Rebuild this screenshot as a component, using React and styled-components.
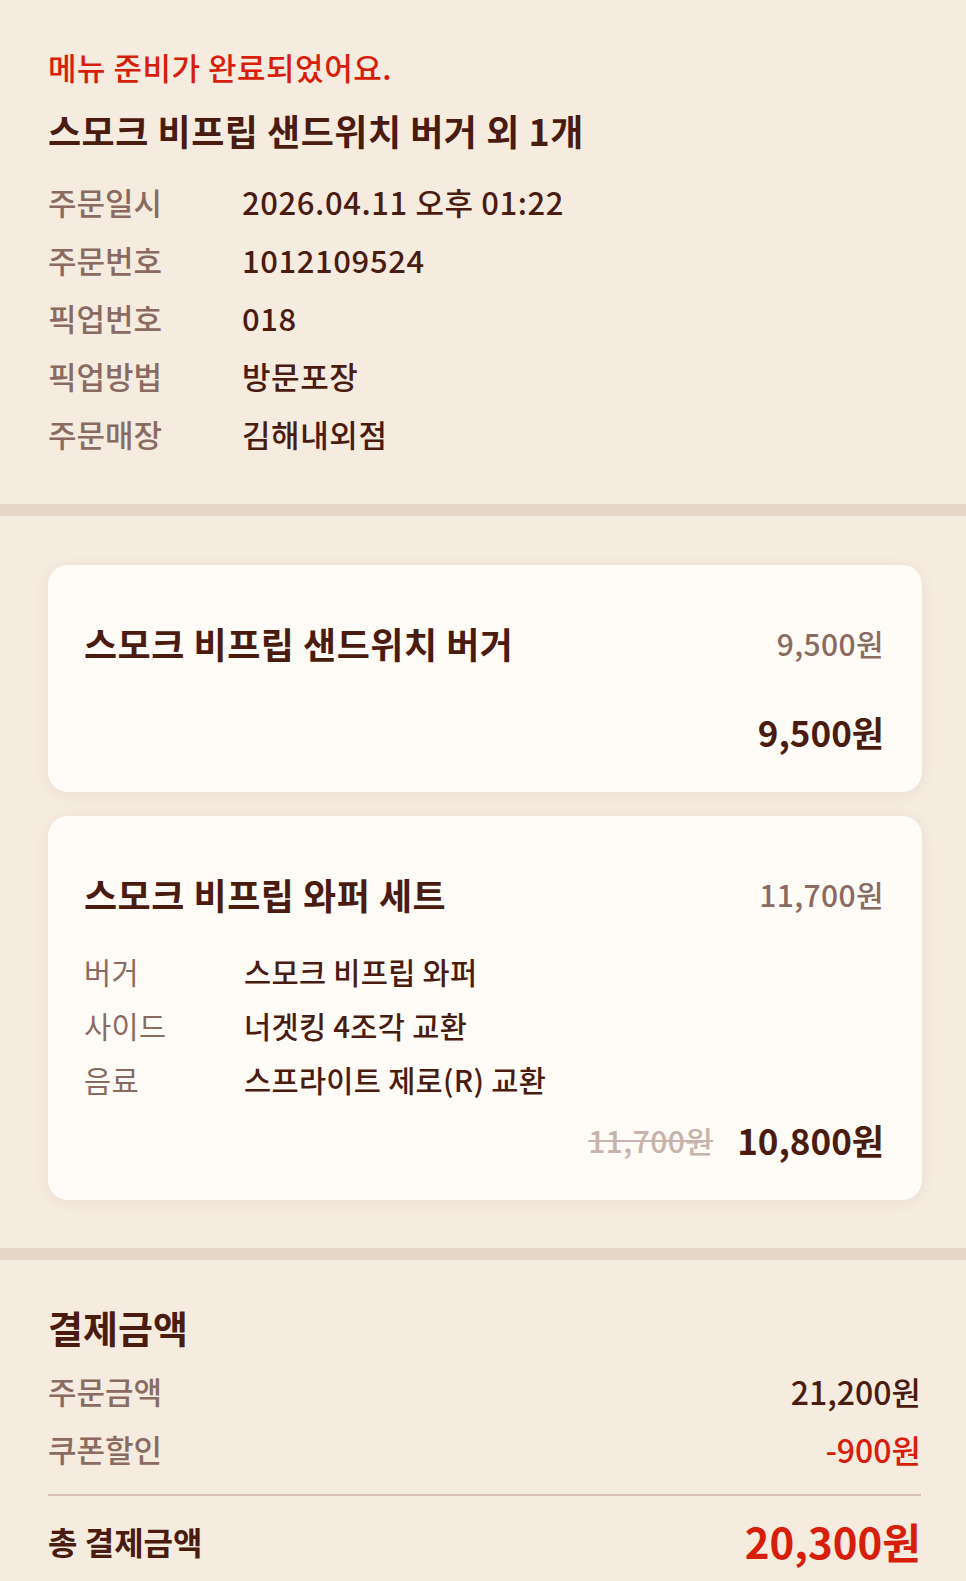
import React from 'react';
import styled, {createGlobalStyle} from 'styled-components';

const colors = {
  bg: '#f5ebdf',
  band: '#e4d7c7',
  card: '#fffbf6',
  red: '#d71e0a',
  dark: '#4a1c10',
  gray: '#8a6b62',
  faint: '#c7b3ab',
  line: '#d8c2b8'
};

const GlobalStyle = createGlobalStyle`
  html, body {
    margin: 0;
    padding: 0;
    background: ${colors.bg};
  }
  body {
    font-family: "Noto Sans CJK KR", "Noto Sans", sans-serif;
    color: ${colors.dark};
  }
  * { box-sizing: border-box; }
`;

const Page = styled.div`
  width: 966px;
  background: ${colors.bg};
`;

const Band = styled.div`
  height: 12px;
  background: ${colors.band};
`;

const Summary = styled.section`
  padding: 47px 48px 41px;
`;

const Status = styled.div`
  color: ${colors.red};
  font-size: 31px;
  font-weight: 500;
  line-height: 40px;
  letter-spacing: 0.5px;
`;

const OrderTitle = styled.h1`
  margin: 21px 0 0;
  font-size: 36px;
  font-weight: 700;
  line-height: 44px;
  letter-spacing: 0.5px;
`;

const InfoList = styled.dl`
  margin: 21px 0 0;
  display: grid;
  grid-template-columns: 194px 1fr;
  font-size: 31px;
  line-height: 58px;
`;

const InfoLabel = styled.dt`
  color: ${colors.gray};
  font-weight: 500;
`;

const InfoValue = styled.dd`
  margin: 0;
  font-weight: 500;
  letter-spacing: 0.6px;
`;

const Items = styled.section`
  padding: 49px 44px 48px 48px;
  display: flex;
  flex-direction: column;
  gap: 24px;
`;

const Card = styled.article`
  background: ${colors.card};
  border-radius: 20px;
  padding: 56px 38px 38px 36px;
  box-shadow: 0 2px 14px rgba(140, 100, 60, 0.09);
`;

const CardHead = styled.div`
  display: flex;
  justify-content: space-between;
  align-items: center;
  line-height: 44px;
`;

const ItemName = styled.h2`
  margin: 0;
  font-size: 36px;
  font-weight: 700;
  letter-spacing: 0.5px;
`;

const UnitPrice = styled.span`
  color: ${colors.gray};
  font-size: 30px;
  font-weight: 500;
  letter-spacing: 0.4px;
`;

const Options = styled.dl`
  margin: 28px 0 0;
  display: grid;
  grid-template-columns: 160px 1fr;
  font-size: 29.5px;
  line-height: 54px;
  letter-spacing: 0.3px;
`;

const OptionLabel = styled.dt`
  color: ${colors.gray};
  font-weight: 400;
`;

const OptionValue = styled.dd`
  margin: 0;
  font-weight: 500;
`;

const PriceRow = styled.div`
  margin-top: ${p => p.$gap}px;
  display: flex;
  justify-content: flex-end;
  align-items: center;
  gap: 24px;
  line-height: 44px;
`;

const OldPrice = styled.s`
  color: ${colors.faint};
  font-size: 30px;
  font-weight: 500;
  letter-spacing: 0.4px;
  text-decoration-thickness: 2px;
`;

const Price = styled.strong`
  font-size: 35px;
  font-weight: 700;
`;

const Payment = styled.section`
  padding: 43px 45px 8px 48px;
`;

const PaymentTitle = styled.h2`
  margin: 0;
  font-size: 38px;
  font-weight: 700;
  line-height: 48px;
`;

const PayRows = styled.div`
  margin-top: 11px;
  padding-bottom: 16px;
  border-bottom: 2px solid ${colors.line};
`;

const PayRow = styled.div`
  display: flex;
  justify-content: space-between;
  font-size: 31px;
  font-weight: 500;
  line-height: 58px;
`;

const PayLabel = styled.span`
  color: ${colors.gray};
`;

const PayValue = styled.span`
  color: ${p => (p.$red ? colors.red : colors.dark)};
  font-size: 32px;
`;

const Total = styled.div`
  margin-top: 15px;
  display: flex;
  justify-content: space-between;
  align-items: center;
  line-height: 60px;
`;

const TotalLabel = styled.span`
  font-size: 32px;
  font-weight: 700;
`;

const TotalValue = styled.span`
  color: ${colors.red};
  font-size: 42px;
  font-weight: 700;
`;

const info = [
  ['주문일시', '2026.04.11 오후 01:22'],
  ['주문번호', '1012109524'],
  ['픽업번호', '018'],
  ['픽업방법', '방문포장'],
  ['주문매장', '김해내외점']
];

const setOptions = [
  ['버거', '스모크 비프립 와퍼'],
  ['사이드', '너겟킹 4조각 교환'],
  ['음료', '스프라이트 제로(R) 교환']
];

export default function App() {
  return (
    <Page>
      <GlobalStyle />
      <Summary>
        <Status>메뉴 준비가 완료되었어요.</Status>
        <OrderTitle>스모크 비프립 샌드위치 버거 외 1개</OrderTitle>
        <InfoList>
          {info.map(([label, value]) => (
            <React.Fragment key={label}>
              <InfoLabel>{label}</InfoLabel>
              <InfoValue>{value}</InfoValue>
            </React.Fragment>
          ))}
        </InfoList>
      </Summary>
      <Band />
      <Items>
        <Card>
          <CardHead>
            <ItemName>스모크 비프립 샌드위치 버거</ItemName>
            <UnitPrice>9,500원</UnitPrice>
          </CardHead>
          <PriceRow $gap={45}>
            <Price>9,500원</Price>
          </PriceRow>
        </Card>
        <Card>
          <CardHead>
            <ItemName>스모크 비프립 와퍼 세트</ItemName>
            <UnitPrice>11,700원</UnitPrice>
          </CardHead>
          <Options>
            {setOptions.map(([label, value]) => (
              <React.Fragment key={label}>
                <OptionLabel>{label}</OptionLabel>
                <OptionValue>{value}</OptionValue>
              </React.Fragment>
            ))}
          </Options>
          <PriceRow $gap={12}>
            <OldPrice>11,700원</OldPrice>
            <Price>10,800원</Price>
          </PriceRow>
        </Card>
      </Items>
      <Band />
      <Payment>
        <PaymentTitle>결제금액</PaymentTitle>
        <PayRows>
          <PayRow>
            <PayLabel>주문금액</PayLabel>
            <PayValue>21,200원</PayValue>
          </PayRow>
          <PayRow>
            <PayLabel>쿠폰할인</PayLabel>
            <PayValue $red>-900원</PayValue>
          </PayRow>
        </PayRows>
        <Total>
          <TotalLabel>총 결제금액</TotalLabel>
          <TotalValue>20,300원</TotalValue>
        </Total>
      </Payment>
    </Page>
  );
}
